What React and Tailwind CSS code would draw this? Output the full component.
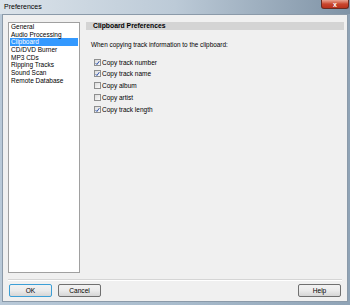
import React from "react";

const items = [
  "General",
  "Audio Processing",
  "Clipboard",
  "CD/DVD Burner",
  "MP3 CDs",
  "Ripping Tracks",
  "Sound Scan",
  "Remote Database",
];

const checks = [
  { label: "Copy track number", on: true, mt: "mt-[10px]" },
  { label: "Copy track name", on: true, mt: "mt-[4px]" },
  { label: "Copy album", on: false, mt: "mt-[5px]" },
  { label: "Copy artist", on: false, mt: "mt-[5px]" },
  { label: "Copy track length", on: true, mt: "mt-[5px]" },
];

function Box({ on }) {
  return (
    <div className="w-[7px] h-[7px] border border-[#8e8f8f] bg-gradient-to-br from-[#dcdcdc] to-[#fbfbfb] flex items-center justify-center shrink-0">
      {on && (
        <svg width="6" height="6" viewBox="0 0 6 6">
          <path d="M0.8 3.2 L2.3 4.8 L5.2 0.8" stroke="#2a4fa8" strokeWidth="1.2" fill="none" />
        </svg>
      )}
    </div>
  );
}

function Btn({ children, def }) {
  return (
    <div
      className={
        "w-[43px] h-[13px] rounded-[2px] border flex items-center justify-center text-[6.6px] text-black bg-gradient-to-b from-[#f2f2f2] via-[#ebebeb] to-[#d6d6d6] " +
        (def ? "border-[#3c9fd6]" : "border-[#707070]")
      }
    >
      {children}
    </div>
  );
}

export default function App() {
  return (
    <div
      className="w-[350px] h-[305px] flex flex-col overflow-hidden bg-gradient-to-r from-[#b9c9d8] via-[#a9bccd] to-[#8fa3b6]"
      style={{ fontFamily: '"Liberation Sans", Arial, sans-serif' }}
    >
      <div className="h-[14px] flex items-start justify-between bg-gradient-to-r from-[#dbe3ea] via-[#bccad7] to-[#7f93a6]">
        <div className="pl-[4px] pt-[3px] text-[7px] leading-[8px] text-black">Preferences</div>
        <div className="mr-[1px] w-[28px] h-[9px] rounded-b-[3px] border border-t-0 border-[#6b2a20] bg-gradient-to-b from-[#e8a493] via-[#c9452d] to-[#b8311c] flex items-center justify-center">
          <span className="text-white text-[7px] leading-[7px] font-bold">x</span>
        </div>
      </div>
      <div className="flex-1 mx-[2px] mb-[3px] bg-[#f0f0f0] border border-[#8b9aa9] flex flex-col">
        <div className="flex flex-1 pt-[7px]">
          <div className="ml-[5px] w-[72px] h-[251px] bg-white border border-[#a0a0a0] px-[1px]">
            {items.map((t) => (
              <div
                key={t}
                className={
                  "h-[7.7px] leading-[7.7px] text-[6.5px] pl-[1px] whitespace-nowrap " +
                  (t === "Clipboard" ? "bg-[#3399ff] text-white" : "text-black")
                }
              >
                {t}
              </div>
            ))}
          </div>
          <div className="ml-[6px] flex-1 mr-[3px] -mt-[1px]">
            <div className="h-[8px] mt-[1px] bg-[#d4d4d4] pl-[7px] text-[6.8px] leading-[8px] font-bold text-black">
              Clipboard Preferences
            </div>
            <div className="mt-[11px] pl-[5px] text-[6.4px] leading-[8px] text-black">
              When copying track information to the clipboard:
            </div>
            {checks.map((c) => (
              <div key={c.label} className={"flex items-center gap-[1px] pl-[8px] h-[7px] " + c.mt}>
                <Box on={c.on} />
                <span className="text-[6.5px] leading-[7px] text-black">{c.label}</span>
              </div>
            ))}
          </div>
        </div>
        <div className="mx-[5px] mt-[6px] h-[2px] border-t border-[#d5d5d5] border-b border-b-white" />
        <div className="flex items-center px-[6px] pt-[3px] pb-[4px]">
          <Btn def>OK</Btn>
          <div className="ml-[6px]">
            <Btn>Cancel</Btn>
          </div>
          <div className="ml-auto">
            <Btn>Help</Btn>
          </div>
        </div>
      </div>
    </div>
  );
}
